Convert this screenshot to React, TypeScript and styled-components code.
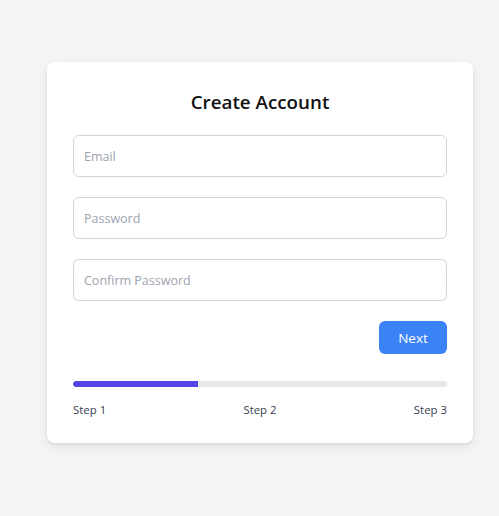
import React from "react";
import styled, { createGlobalStyle } from "styled-components";

const Global = createGlobalStyle`
  html, body { margin: 0; padding: 0; background: #f3f4f6; }
  body { font-family: "Open Sans", "Noto Sans", sans-serif; }
  * { box-sizing: border-box; }
`;

const Page = styled.div`
  min-height: 516px;
  padding: 62px 0 0 47px;
`;

const Card = styled.div`
  width: 426px;
  background: #ffffff;
  border-radius: 8px;
  box-shadow: 0 4px 8px rgba(0, 0, 0, 0.08), 0 1px 3px rgba(0, 0, 0, 0.06);
  padding: 26px 26px 25px;
  display: flex;
  flex-direction: column;
`;

const Title = styled.h1`
  margin: 0 0 19px;
  font-size: 18.8px;
  line-height: 28px;
  font-weight: 600;
  color: #111111;
  text-align: center;
`;

const Field = styled.input`
  height: 42px;
  width: 100%;
  border: 1px solid #d1d5db;
  border-radius: 6px;
  padding: 0 10px;
  font-family: inherit;
  font-size: 12.5px;
  color: #111827;
  margin-bottom: 20px;
  outline: none;
  &::placeholder { color: #9ca3af; }
`;

const Actions = styled.div`
  display: flex;
  justify-content: flex-end;
`;

const Button = styled.button`
  width: 68px;
  height: 33px;
  border: none;
  border-radius: 6px;
  background: #3b82f6;
  color: #ffffff;
  font-family: inherit;
  font-size: 13.5px;
  font-weight: 500;
`;

const Track = styled.div`
  margin-top: 27px;
  height: 6px;
  border-radius: 3px;
  background: #e5e7eb;
  overflow: hidden;
`;

const Fill = styled.div`
  height: 100%;
  background: #4f46e5;
  border-radius: 3px 0 0 3px;
`;

const Steps = styled.div`
  margin-top: 15px;
  display: flex;
  justify-content: space-between;
  font-size: 11.4px;
  line-height: 16px;
  color: #374151;
`;

export default function App() {
  const step = 1;
  const total = 3;
  return (
    <>
      <Global />
      <Page>
        <Card>
          <Title>Create Account</Title>
          <Field type="email" placeholder="Email" />
          <Field type="password" placeholder="Password" />
          <Field type="password" placeholder="Confirm Password" />
          <Actions>
            <Button>Next</Button>
          </Actions>
          <Track>
            <Fill style={{ width: `${(step / total) * 100}%` }} />
          </Track>
          <Steps>
            <span>Step 1</span>
            <span>Step 2</span>
            <span>Step 3</span>
          </Steps>
        </Card>
      </Page>
    </>
  );
}
